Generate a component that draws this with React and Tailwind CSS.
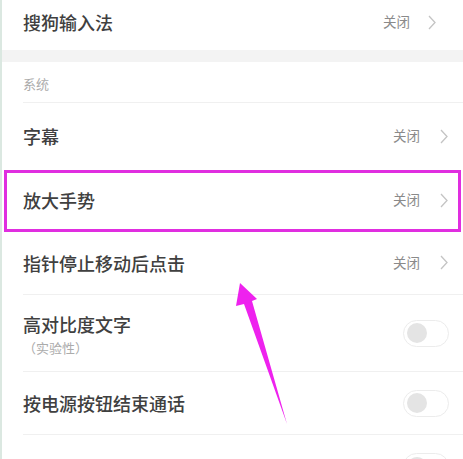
import React from "react";

const font = { fontFamily: '"Noto Sans CJK SC", "Noto Sans", sans-serif' };

function Chevron() {
  return (
    <svg width="8" height="15" viewBox="0 0 8 15" className="block">
      <polyline points="1,1 7,7.5 1,14" fill="none" stroke="#c4c4c4" strokeWidth="1.3" />
    </svg>
  );
}

function Toggle() {
  return (
    <div className="w-[46px] h-[27px] rounded-full border border-[#ececec] bg-white flex items-center">
      <div className="w-[20px] h-[20px] rounded-full bg-[#e4e4e4] ml-[3px]" />
    </div>
  );
}

function NavRow({ title, h }) {
  return (
    <div className={`flex items-center justify-between pl-[23px] pr-[15px] ${h}`}>
      <span className="text-[18px] font-medium text-[#404040] leading-none">{title}</span>
      <div className="flex items-center gap-[20px]">
        <span className="text-[13.5px] text-[#8a8a8a] leading-none">关闭</span>
        <Chevron />
      </div>
    </div>
  );
}

function Divider() {
  return <div className="ml-[23px] h-px bg-[#f0f0f0]" />;
}

export default function App() {
  return (
    <div className="relative w-[463px] h-[459px] overflow-hidden bg-white" style={font}>
      <div className="absolute left-0 top-0 bottom-0 w-[2px] bg-[#dbe8e1]" />
      <div className="flex flex-col">
        <div className="h-[50px] pb-[6px] flex items-center justify-between pl-[23px] pr-[27px]">
          <span className="text-[18px] font-medium text-[#404040] leading-none">搜狗输入法</span>
          <div className="flex items-center gap-[18px]">
            <span className="text-[13.5px] text-[#8a8a8a] leading-none">关闭</span>
            <Chevron />
          </div>
        </div>
        <div className="h-[12px] bg-[#f3f3f3]" />
        <div className="h-[40px] flex items-center pl-[23px] pt-[3px]">
          <span className="text-[13px] text-[#ababab] leading-none">系统</span>
        </div>
        <Divider />
        <NavRow title="字幕" h="h-[66px]" />
        <NavRow title="放大手势" h="h-[62px]" />
        <NavRow title="指针停止移动后点击" h="h-[63px]" />
        <Divider />
        <div className="h-[76px] flex items-center justify-between pl-[23px] pr-[14px]">
          <div className="flex flex-col gap-[8px] pt-[2px]">
            <span className="text-[18px] font-medium text-[#404040] leading-none">高对比度文字</span>
            <span className="text-[13px] text-[#ababab] leading-none">（实验性）</span>
          </div>
          <Toggle />
        </div>
        <Divider />
        <div className="h-[62px] flex items-center justify-between pl-[23px] pr-[14px]">
          <span className="text-[18px] font-medium text-[#404040] leading-none">按电源按钮结束通话</span>
          <Toggle />
        </div>
        <Divider />
        <div className="h-[60px] flex items-start justify-end pr-[14px] pt-[18px]">
          <Toggle />
        </div>
      </div>

      {/* annotation: highlight box */}
      <div className="absolute left-[4px] top-[170px] w-[457px] h-[62px] border-[3px] border-[#e02ee0]" />

      {/* annotation: arrow */}
      <svg className="absolute left-0 top-0" width="463" height="459" viewBox="0 0 463 459">
        <polygon
          points="240,283 257,299 252,301 287,424 244,304 236,306"
          fill="#ee22ee"
        />
      </svg>
    </div>
  );
}
